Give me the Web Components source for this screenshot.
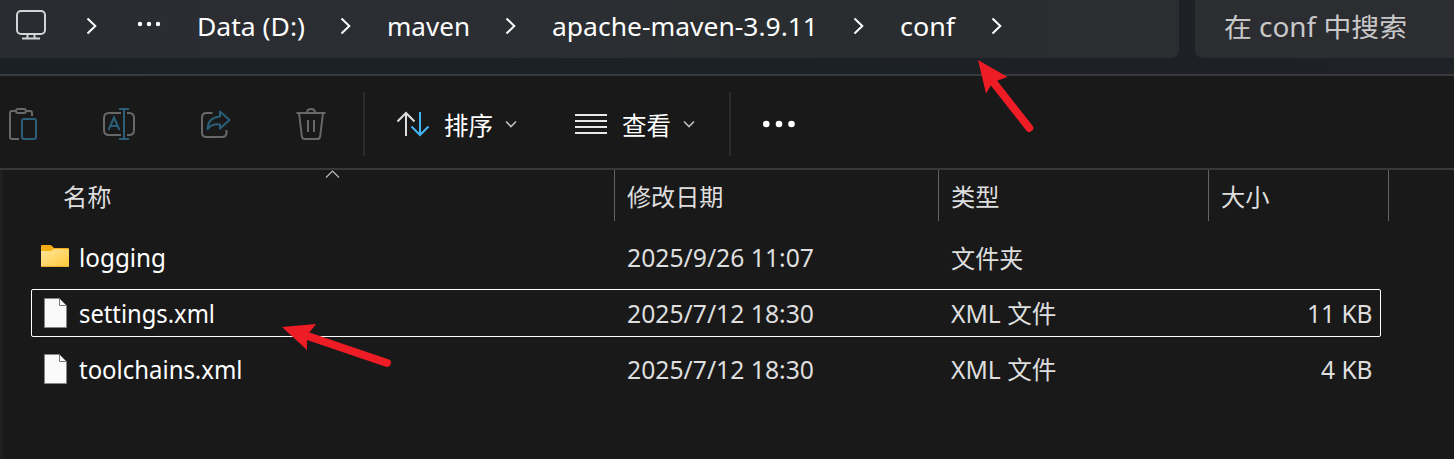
<!DOCTYPE html>
<html lang="zh-CN">
<head>
<meta charset="utf-8">
<title>conf</title>
<style>
html,body{margin:0;background:#191919}
body{font-family:"Noto Sans","Noto Sans CJK SC",sans-serif;overflow:hidden}
</style>
</head>
<body>
<file-explorer></file-explorer>
<script>
function define(name, html, init) {
  const tpl = document.createElement('template');
  tpl.innerHTML = html;
  customElements.define(name, class extends HTMLElement {
    connectedCallback() {
      if (this.shadowRoot) return;
      this.attachShadow({ mode: 'open' }).append(tpl.content.cloneNode(true));
      if (init) init(this, this.shadowRoot);
    }
  });
}

/* Single-line label, condensed or widened to the width given in "w". */
define('fit-text', `<style>
:host{display:block;white-space:nowrap;line-height:32px;height:32px}
span{display:inline-block;transform-origin:0 50%}
</style><span><slot></slot></span>`, (host, root) => {
  const w = parseFloat(host.getAttribute('w'));
  host.style.width = w + 'px';
  const span = root.querySelector('span');
  const natural = span.getBoundingClientRect().width;
  if (natural) span.style.transform = 'scaleX(' + w / natural + ')';
});

const icons = {
  monitor: ['14 8 34 34', '<g stroke="#d3d4d5" stroke-width="2"><rect x="17" y="11" width="28" height="23" rx="4"/><path d="M27.5 34v4M34.5 34v4M22 38.4h18"/></g>'],
  crumb: ['84 14 14 24', '<path d="M87.5 18.5L95.3 26L87.5 33.5" stroke="#fff" stroke-width="2"/>'],
  more: ['136 20 26 8', '<g fill="#fff"><circle cx="140" cy="24" r="2.2"/><circle cx="149" cy="24" r="2.2"/><circle cx="158" cy="24" r="2.2"/></g>'],
  paste: ['8 106 30 36', '<g stroke-width="2"><path d="M16 111h-4q-2 0-2 2v24q0 2 2 2h7M26 111h4q2 0 2 2v3" stroke="#686868"/><rect x="16" y="109" width="10" height="4" rx="2" stroke="#686868"/><rect x="22" y="119" width="14" height="20" rx="2" stroke="#2b5e79"/></g>'],
  rename: ['102 106 34 36', '<g stroke-width="2"><path d="M121 113h-12q-5 0-5 5v12q0 5 5 5h12M127 113h2q5 0 5 5v12q0 5-5 5h-2" stroke="#686868"/><path d="M124 109v30M119 109h10M119 139h10M108.5 130L114 117.500L119.500 130M110.500 126h7" stroke="#2b5e79"/></g>'],
  share: ['200 106 32 36', '<g stroke-width="2"><path d="M212.500 113h-6q-4.500 0-4.500 4.500v15q0 4.500 4.500 4.500h15.500q4.500 0 4.500-4.500v-2.500" stroke="#686868"/><path d="M220 111.500L229.500 120L220 128.500V124.500Q212 123.500 207.500 129Q208 117.500 220 116.500Z" stroke="#2b5e79" stroke-linejoin="round"/></g>'],
  trash: ['296 106 30 36', '<g stroke="#686868" stroke-width="2"><path d="M296.500 113h29M307 113q0-4 4-4t4 4M299 113l2.800 23q.4 3 3 3h12.400q2.600 0 3-3L323 113M308 120v12M314 120v12"/></g>'],
  sort: ['396 110 34 28', '<g stroke-width="2"><path d="M406 113v23M397.500 121.500L406 113L414.500 121.500" stroke="#dedede"/><path d="M420 112v23M411.500 126.500L420 135L428.500 126.500" stroke="#43b6f5"/></g>'],
  view: ['574 112 34 24', '<path d="M575 115h32M575 121h32M575 127h32M575 133h32" stroke="#e8e8e8" stroke-width="2"/>'],
  down: ['504 118 14 12', '<path d="M506 121.500L511 126.500L516 121.500" stroke="#bdbdbd" stroke-width="1.600"/>'],
  dots: ['762 118 34 12', '<g fill="#fff"><circle cx="766.300" cy="124" r="3.300"/><circle cx="779" cy="124" r="3.300"/><circle cx="791.500" cy="124" r="3.300"/></g>'],
  up: ['324 169 16 10', '<path d="M326 177.500L332.500 171L339 177.500" stroke="#bcbcbc" stroke-width="1.200"/>'],
  folder: ['40 242 30 28', '<defs><linearGradient id="g" x2="1" y2="1"><stop stop-color="#ffe69c"/><stop offset="1" stop-color="#ffc838"/></linearGradient></defs><path d="M41 246q0-1 1-1h8q1 0 2 1l2 2h14q1 0 1 1v10H41z" fill="#f7ad14"/><path d="M41 251h9q1.500 0 2.500-1l1-1h14.500q1 0 1 1v16q0 1-1 1H42q-1 0-1-1z" fill="url(#g)"/><path d="M41.500 266.500h27" stroke="#e8ad2c"/>'],
  file: ['43 297 26 32', '<path d="M44.500 298.500H59.500L66.500 305.500V327.500H44.500Z" fill="#fafafa" stroke="#858585"/><path d="M59.500 298.500V305.500H66.500" stroke="#777"/>']
};
define('ui-icon', `<style>:host{display:block;flex:none}svg{display:block;fill:none}</style>`, (host, root) => {
  const [box, body] = icons[host.getAttribute('name')];
  const [, , w, h] = box.split(' ');
  root.innerHTML += `<svg width="${w}" height="${h}" viewBox="${box}">${body}</svg>`;
});

define('address-bar', `<style>
:host{display:grid;grid-template-columns:1179px 1fr;column-gap:16px;height:58px;padding-bottom:16px;border-bottom:2px solid #393a3b;background:linear-gradient(90deg,#1b2025,#1c2126 50%,#1e2126)}
.path{display:grid;grid-template-columns:70px 52px 60.5px 142px 47.500px 117.500px 47.500px 300px 48px 90px 1fr;align-items:start;padding-left:14px;border-radius:0 0 8px 0;background:linear-gradient(90deg,#2a2c31,#2b2e32 50%,#292d2f 75%,#2c2d31);color:#fff;font-size:26.300px}
.path ui-icon{margin-top:14px}
.path ui-icon[name=monitor]{margin-top:8px}
.path ui-icon[name=more]{margin-top:20px}
.path fit-text{margin-top:10px}
.search{border-radius:0 0 0 8px;background:#2c2d31;color:#c8c8c9;padding:11px 0 0 29px;font-size:26.500px}
</style>
<div class="path">
<ui-icon name="monitor"></ui-icon><ui-icon name="crumb"></ui-icon><ui-icon name="more"></ui-icon>
<fit-text w="108">Data (D:)</fit-text><ui-icon name="crumb" style="margin-left:-1px"></ui-icon>
<fit-text w="83" style="margin-left:1px">maven</fit-text><ui-icon name="crumb" style="margin-left:-1px"></ui-icon>
<fit-text w="266" style="margin-left:1px">apache-maven-3.9.11</fit-text><ui-icon name="crumb"></ui-icon>
<fit-text w="55" style="margin-left:1px">conf</fit-text><ui-icon name="crumb"></ui-icon>
</div>
<div class="search"><fit-text w="183">在 conf 中搜索</fit-text></div>`);

define('tool-bar', `<style>
:host{display:flex;align-items:center;height:92px;box-sizing:border-box;padding:4px 0 0 8px;background:#191919;color:#fff;font-size:24.500px}
i{width:2px;height:64px;background:#2b2b2b}
fit-text{padding-top:3px}
</style>
<ui-icon name="paste"></ui-icon>
<ui-icon name="rename" style="margin-left:64px"></ui-icon>
<ui-icon name="share" style="margin-left:64px"></ui-icon>
<ui-icon name="trash" style="margin-left:64px"></ui-icon>
<i style="margin-left:37px"></i>
<ui-icon name="sort" style="margin-left:31px"></ui-icon>
<fit-text w="49" style="margin-left:14px">排序</fit-text>
<ui-icon name="down" style="margin-left:11px"></ui-icon>
<ui-icon name="view" style="margin-left:56px"></ui-icon>
<fit-text w="49" style="margin-left:14px">查看</fit-text>
<ui-icon name="down" style="margin-left:11px"></ui-icon>
<i style="margin-left:33px"></i>
<ui-icon name="dots" style="margin-left:31px"></ui-icon>`);

define('column-head', `<style>
:host{display:grid;grid-template-columns:612px 324px 270px 180px;height:51px;color:#dedede;font-size:24px}
div{border-right:1px solid #636363;padding:11px 0 0 11.500px;position:relative}
div.first{padding-left:59.500px}
ui-icon{position:absolute;left:321px;top:-1px}
</style>
<div class="first"><fit-text w="48.5">名称</fit-text><ui-icon name="up"></ui-icon></div>
<div><fit-text w="96.5">修改日期</fit-text></div>
<div><fit-text w="48.5">类型</fit-text></div>
<div><fit-text w="48.5">大小</fit-text></div>`);

define('file-row', `<style>
:host{display:grid;grid-template-columns:47px 547.500px 324px 1fr auto;align-items:center;height:48px;width:1350px;box-sizing:border-box;margin:0 0 8px 28px;border:1px solid transparent;border-radius:2px;padding:0 7.500px 0 0;color:#dedede;font-size:24.500px}
:host([focused]){border-color:#fff}
.icon ui-icon{margin-left:11px}
.icon ui-icon[name=folder]{margin:-2px 0 0 8px}
::slotted(*){padding-top:2px}
::slotted([slot=name]){color:#fff}
::slotted(.cjk){padding-top:4px}
</style><div class="icon"></div><slot name="name"></slot><slot name="date"></slot><slot name="type"></slot><slot name="size"></slot>`, (host, root) => {
  const icon = document.createElement('ui-icon');
  icon.setAttribute('name', host.getAttribute('icon'));
  root.querySelector('.icon').append(icon);
});

define('red-arrow', `<style>
:host{display:block;position:absolute}
svg{display:block;overflow:visible}
</style><svg></svg>`, (host, root) => {
  const svg = root.querySelector('svg');
  svg.setAttribute('width', host.getAttribute('w'));
  svg.setAttribute('height', host.getAttribute('h'));
  svg.innerHTML = `<path fill="#ee1c24" d="${host.getAttribute('head')}"/><path stroke="#ee1c24" stroke-width="7.800" stroke-linecap="round" d="${host.getAttribute('shaft')}"/>`;
});

define('file-explorer', `<style>
:host{display:block;position:relative;width:1454px;height:459px;overflow:hidden;background:#191919}
main{height:289px;border-top:2px solid #393939}
.list{height:289px;border-left:3px solid #1f1f1f}
section{padding-top:12px}
</style>
<address-bar></address-bar>
<tool-bar></tool-bar>
<main><div class="list">
<column-head></column-head>
<section>
<file-row icon="folder"><fit-text slot="name" w="87">logging</fit-text><fit-text slot="date" w="187">2025/9/26 11:07</fit-text><fit-text class="cjk" slot="type" w="72.5">文件夹</fit-text></file-row>
<file-row icon="file" focused><fit-text slot="name" w="136">settings.xml</fit-text><fit-text slot="date" w="187">2025/7/12 18:30</fit-text><fit-text slot="type" w="105.5">XML 文件</fit-text><fit-text slot="size" w="65.5">11 KB</fit-text></file-row>
<file-row icon="file"><fit-text slot="name" w="163.5">toolchains.xml</fit-text><fit-text slot="date" w="187">2025/7/12 18:30</fit-text><fit-text slot="type" w="105.5">XML 文件</fit-text><fit-text slot="size" w="51.5">4 KB</fit-text></file-row>
</section>
</div></main>
<red-arrow style="left:978px;top:60px" w="56" h="73" head="M0 0L29.600 17L19.500 20.500L13.500 24.500L8 33.500Z" shaft="M16 23L51.300 68"></red-arrow>
<red-arrow style="left:282px;top:324px" w="110" h="44" head="M0 3L34 0L27 9L25 15.500V26Z" shaft="M27 12.500L105 39"></red-arrow>`);
</script>
</body>
</html>
